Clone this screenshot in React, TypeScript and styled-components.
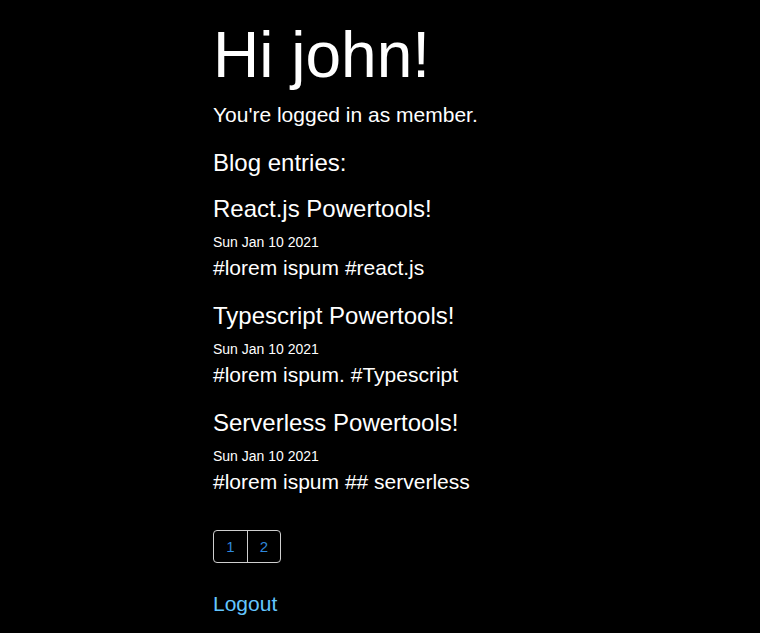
import styled, { createGlobalStyle } from "styled-components"

const GlobalStyle = createGlobalStyle`
  html, body {
    margin: 0;
    padding: 0;
    background: #000;
  }
  body {
    font-family: "Liberation Sans", Arial, sans-serif;
    color: #fff;
  }
`

type Entry = {
  title: string
  date: string
  tags: string
}

const entries: Entry[] = [
  { title: "React.js Powertools!", date: "Sun Jan 10 2021", tags: "#lorem ispum #react.js" },
  { title: "Typescript Powertools!", date: "Sun Jan 10 2021", tags: "#lorem ispum. #Typescript" },
  { title: "Serverless Powertools!", date: "Sun Jan 10 2021", tags: "#lorem ispum ## serverless" },
]

export default function App() {
  return <>
    <GlobalStyle />
    <Page>
      <Greeting>Hi john!</Greeting>
      <Role>You're logged in as member.</Role>
      <SectionTitle>Blog entries:</SectionTitle>
      <EntryList>
        {entries.map((e) => (
          <article key={e.title}>
            <EntryTitle>{e.title}</EntryTitle>
            <EntryDate>{e.date}</EntryDate>
            <EntryTags>{e.tags}</EntryTags>
          </article>
        ))}
      </EntryList>
      <Pagination>
        <PageButton>1</PageButton>
        <PageButton>2</PageButton>
      </Pagination>
      <LogoutLink href="#">Logout</LogoutLink>
    </Page>
  </>
}

const Page = styled.main`
  width: 334px;
  margin: 0 auto;
  padding-top: 19px;
  display: flex;
  flex-direction: column;
  align-items: flex-start;
`

const Greeting = styled.h1`
  margin: 0;
  font-size: 64px;
  line-height: 72px;
  font-weight: normal;
`

const Role = styled.p`
  margin: 12px 0 0;
  font-size: 21px;
  line-height: 24px;
`

const SectionTitle = styled.h2`
  margin: 22px 0 0;
  font-size: 24px;
  line-height: 28px;
  font-weight: normal;
`

const EntryList = styled.div`
  margin-top: 18px;
  display: flex;
  flex-direction: column;
  gap: 22px;
`

const EntryTitle = styled.h3`
  margin: 0;
  font-size: 24px;
  line-height: 28px;
  font-weight: normal;
`

const EntryDate = styled.div`
  margin-top: 11px;
  font-size: 14px;
  line-height: 16px;
`

const EntryTags = styled.p`
  margin: 6px 0 0;
  font-size: 21px;
  line-height: 24px;
`

const Pagination = styled.nav`
  margin-top: 36px;
  display: flex;
  border: 1px solid #cfcfcf;
  border-radius: 4px;
`

const PageButton = styled.button`
  width: 33px;
  height: 31px;
  padding: 0;
  background: transparent;
  border: none;
  color: #2f88dc;
  font-family: "Liberation Sans", Arial, sans-serif;
  font-size: 15px;
  cursor: pointer;

  & + & {
    border-left: 1px solid #cfcfcf;
  }
`

const LogoutLink = styled.a`
  margin-top: 29px;
  font-size: 21px;
  line-height: 24px;
  color: #64c6ff;
  text-decoration: none;
`
